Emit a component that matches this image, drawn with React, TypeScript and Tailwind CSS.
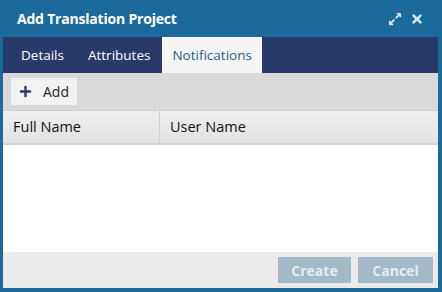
import { FaExpandAlt, FaTimes, FaPlus } from "react-icons/fa";

const tabs = ["Details", "Attributes", "Notifications"];

export default function App() {
  return (
    <div
      className="w-[442px] h-[292px] flex flex-col bg-[#1b6a9b] pl-[3px] pr-[4px] pb-[4px] overflow-hidden"
      style={{ fontFamily: '"Open Sans", "Noto Sans", sans-serif' }}
    >
      {/* Title bar */}
      <div className="h-[37px] -ml-[3px] -mr-[4px] pl-[17px] pr-[18px] flex items-center justify-between text-white shrink-0">
        <span className="text-[14px] font-bold tracking-[-0.2px]">Add Translation Project</span>
        <div className="flex items-center gap-[8px] text-[#d3e6f2]">
          <FaExpandAlt className="w-[14px] h-[14px]" />
          <FaTimes className="w-[14px] h-[14px]" />
        </div>
      </div>

      {/* Tabs */}
      <div className="h-[36px] bg-[#283a69] flex pl-[6px] shrink-0">
        {tabs.map((t) => (
          <div
            key={t}
            className={
              t === "Notifications"
                ? "px-[10px] flex items-center bg-[#f5f5f5] text-[#1e5f8e] text-[13.5px] font-medium"
                : "px-[12px] flex items-center text-white text-[13.5px] font-medium"
            }
          >
            {t}
          </div>
        ))}
      </div>

      {/* Toolbar */}
      <div className="h-[37px] bg-[#d9d9d9] flex items-center pl-[8px] shrink-0">
        <button className="h-[27px] w-[66px] pl-[8px] bg-[#f2f2f2] flex items-center gap-[11px] text-[14px] font-medium text-[#222]">
          <FaPlus className="w-[13px] h-[13px] text-[#283a69]" />
          Add
        </button>
      </div>

      {/* Header */}
      <div className="h-[35px] flex bg-gradient-to-b from-[#efefef] to-[#e2e2e2] border-t border-[#cfcfcf] border-b-[2px] border-b-[#d2d2d2] text-[14.5px] font-medium text-[#111] shrink-0">
        <div className="w-[157px] pl-[10px] flex items-center border-r border-[#d0d0d0]">Full Name</div>
        <div className="flex-1 pl-[10px] flex items-center">User Name</div>
      </div>

      {/* Body */}
      <div className="flex-1 bg-white" />

      {/* Footer */}
      <div className="h-[36px] bg-[#ebebeb] flex items-center justify-end gap-[7px] pr-[5px] shrink-0">
        <button className="w-[73px] h-[26px] bg-[#a2b9c8] text-[#e4ecf1] text-[14px] font-bold">Create</button>
        <button className="w-[75px] h-[26px] bg-[#a2b9c8] text-[#e4ecf1] text-[14px] font-bold">Cancel</button>
      </div>
    </div>
  );
}
